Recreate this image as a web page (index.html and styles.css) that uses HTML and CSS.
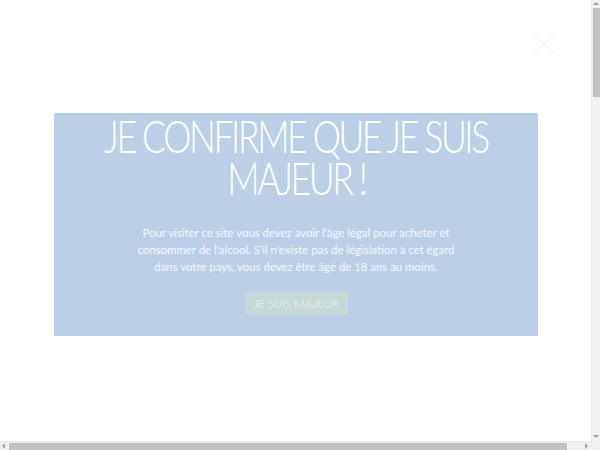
FILE: index.html
```html
<!DOCTYPE html>
<html lang="fr">
<head>
<meta charset="utf-8">
<title>Age gate</title>
<link rel="stylesheet" href="styles.css">
</head>
<body>
<div class="frame">
  <div class="view">
    <button class="close" aria-label="Fermer">
      <svg width="24" height="24" viewBox="0 0 24 24"><path d="M1 1 L23 23 M23 1 L1 23" stroke="#f3f3f3" stroke-width="1.2" fill="none"/></svg>
    </button>
    <div class="gate">
      <h1 class="title"><span class="line">JE CONFIRME QUE JE SUIS</span><span class="line">MAJEUR !</span></h1>
      <p class="text">Pour visiter ce site vous devez avoir l'âge légal pour acheter et<br>consommer de l'alcool. S'il n'existe pas de législation à cet égard<br>dans votre pays, vous devez être âgé de 18 ans au moins.</p>
      <button class="btn">JE SUIS MAJEUR</button>
    </div>
  </div>
  <div class="vbar">
    <span class="arrow up"></span>
    <div class="vthumb"></div>
    <div class="fill"></div>
    <span class="arrow down"></span>
  </div>
  <div class="hbar">
    <span class="arrow left"></span>
    <div class="hthumb"></div>
    <div class="fill"></div>
    <span class="arrow right"></span>
  </div>
  <div class="corner"></div>
</div>
</body>
</html>
```
FILE: styles.css
```css
html, body {
  margin: 0;
  padding: 0;
  background: #ffffff;
  overflow: hidden;
}
.frame {
  display: grid;
  grid-template-columns: 591px 9px;
  grid-template-rows: 441px 9px;
  width: 600px;
  height: 450px;
}
.view {
  position: relative;
  padding-top: 113px;
  box-sizing: border-box;
}
.close {
  position: absolute;
  left: 532px;
  top: 32px;
  width: 24px;
  height: 24px;
  padding: 0;
  border: 0;
  background: transparent;
}
.close svg { display: block; }
.gate {
  width: 484px;
  height: 223px;
  margin-left: 54px;
  background: #bccfe7;
  display: flex;
  flex-direction: column;
  align-items: center;
  box-sizing: border-box;
  padding-top: 2px;
}
.title {
  margin: 0;
  font-family: "Lato", sans-serif;
  font-weight: 300;
  font-size: 45px;
  color: #ffffff;
  text-align: center;
  display: flex;
  flex-direction: column;
  align-items: center;
  gap: 0;
}
.line {
  display: block;
  height: 42px;
  line-height: 42px;
  overflow: visible;
  letter-spacing: -3px;
  white-space: nowrap;
  transform: scaleX(0.79);
}
.text {
  margin: 25px 0 0;
  font-family: "Lato", sans-serif;
  font-weight: 400;
  font-size: 11.4px;
  line-height: 17px;
  color: #f3f7fb;
  text-align: center;
}
.btn {
  margin-top: 17px;
  width: 103px;
  height: 23px;
  padding: 0;
  border: 0;
  background: #c6d8d7;
  color: #eef3f4;
  font-family: "Lato", sans-serif;
  font-weight: 300;
  font-size: 12px;
  letter-spacing: -0.3px;
}
.vbar {
  display: flex;
  flex-direction: column;
  align-items: center;
  background: #f1f1f1;
  border-left: 1px solid #e8e8e8;
  box-sizing: border-box;
}
.hbar {
  display: flex;
  align-items: center;
  background: #f1f1f1;
  border-top: 1px solid #e8e8e8;
  box-sizing: border-box;
}
.corner { background: #f1f1f1; }
.fill { flex: 1; }
.vthumb {
  width: 7px;
  height: 89px;
  margin-top: 3px;
  background: #c1c1c1;
}
.hthumb {
  width: 558px;
  height: 7px;
  margin-left: 4px;
  background: #c1c1c1;
}
.arrow {
  width: 0;
  height: 0;
  border-style: solid;
  border-color: transparent;
  flex: none;
}
.arrow.up {
  margin-top: 2px;
  border-width: 0 3px 3px 3px;
  border-bottom-color: #a3a3a3;
}
.arrow.down {
  margin-bottom: 3px;
  border-width: 3px 3px 0 3px;
  border-top-color: #a3a3a3;
}
.arrow.left {
  margin-left: 2px;
  border-width: 3px 3px 3px 0;
  border-right-color: #a3a3a3;
}
.arrow.right {
  margin-right: 3px;
  border-width: 3px 0 3px 3px;
  border-left-color: #a3a3a3;
}
```
